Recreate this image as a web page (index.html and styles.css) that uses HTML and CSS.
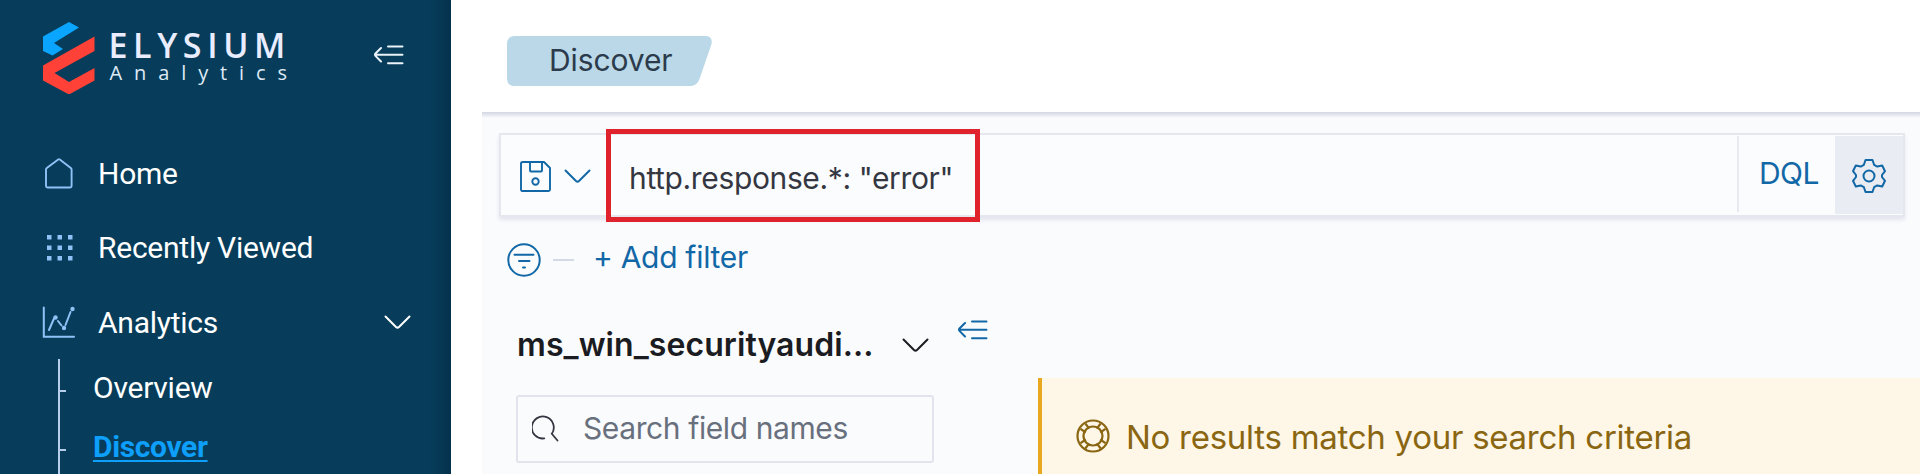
FILE: index.html
```html
<!DOCTYPE html>
<html lang="en">
<head>
<meta charset="utf-8">
<title>Discover - Elysium Analytics</title>
<link rel="stylesheet" href="styles.css">
</head>
<body>
<div class="app">
  <aside class="sidebar">
    <header class="brand">
      <svg class="brand-mark" width="52" height="72" viewBox="0 0 52 72">
        <path fill="#0aa5ff" d="M0 14.500 26 0l10 5.500L11 21l9 6-10.500 6.500L0 29z"/>
        <path fill="#ff4137" d="M0 43.500 51.500 14.500V29L11.500 51 26 60l25.500-14v12.500L26 72.500 0 58.500z"/>
      </svg>
      <div class="brand-name">
        <span class="brand-title">ELYSIUM</span>
        <span class="brand-sub">Analytics</span>
      </div>
      <svg class="brand-collapse" width="30" height="20" viewBox="0 0 30 20" fill="none" stroke="currentColor" stroke-width="2" stroke-linecap="round"><path d="M14 1.500h14.500M1.500 9.700h27M14 18.200h14.500M7 3 1.500 8.500q-1 1.200 0 2.400L7 16.500"/></svg>
    </header>
    <nav class="nav">
      <a class="nav-item">
        <svg class="icon" width="34" height="34" viewBox="0 0 34 34" fill="none" stroke="currentColor" stroke-width="1.900" stroke-linejoin="round"><path d="M4 12.500q0-1 .8-1.600L16.200 2.400q.8-.6 1.600 0l11 8.500q.8.600.8 1.600V29q0 1.500-1.500 1.500H5.500Q4 30.500 4 29z"/></svg>
        <span>Home</span>
      </a>
      <a class="nav-item">
        <svg class="icon" width="34" height="34" viewBox="0 0 34 34" fill="currentColor"><path d="M5 4h4.500v4.500H5zM15.500 4H20v4.500h-4.500zM26 4h4.500v4.500H26zM5 14.500h4.500V19H5zM15.500 14.500H20V19h-4.500zM26 14.500h4.500V19H26zM5 25h4.500v4.500H5zM15.500 25H20v4.500h-4.500zM26 25h4.500v4.500H26z"/></svg>
        <span>Recently Viewed</span>
      </a>
      <a class="nav-item nav-open">
        <svg class="icon" width="34" height="34" viewBox="0 0 34 34" fill="none" stroke="currentColor" stroke-width="2" stroke-linecap="round"><path d="M1.800 2.500v29.200H32M7 25l5-11.500M16 16l3.500 4.500M23.500 20l5-13"/><g fill="currentColor" stroke="none"><circle cx="13.500" cy="12.500" r="2.200"/><circle cx="22" cy="23" r="2.200"/><circle cx="30.500" cy="4" r="2.200"/></g></svg>
        <span>Analytics</span>
        <svg class="nav-chevron" width="27" height="15" viewBox="0 0 27 15" fill="none" stroke="currentColor" stroke-width="2" stroke-linecap="round"><path d="M1.500 1.500 12 12q1.500 1.300 3 0L25.500 1.500"/></svg>
      </a>
      <div class="subnav">
        <a class="subnav-item"><span>Overview</span></a>
        <a class="subnav-item subnav-active"><span>Discover</span></a>
      </div>
    </nav>
  </aside>

  <main class="main">
    <header class="topbar">
      <div class="crumb">
        <svg class="crumb-shape" width="205" height="50" viewBox="0 0 205 50"><path fill="#bad8e8" d="M8 0h190q8 0 6.500 8l-12 35q-2.500 7-9 7H8q-8 0-8-8V8q0-8 8-8z"/></svg>
        <span class="crumb-text">Discover</span>
      </div>
    </header>
    <section class="content">
      <div class="querybar">
        <div class="saved">
          <svg width="31" height="31" viewBox="0 0 31 31" fill="none" stroke="currentColor" stroke-width="1.900" stroke-linejoin="round"><path d="M3 1h21l6 6v21.500q0 1.500-1.500 1.500H3q-2 0-2-1.500V2.500Q1 1 3 1zM10 1v8.500q0 1 1 1h10q1 0 1-1V1"/><circle cx="15.500" cy="20.500" r="3.200"/></svg>
          <svg width="27" height="15" viewBox="0 0 27 15" fill="none" stroke="currentColor" stroke-width="2" stroke-linecap="round"><path d="M1.500 1.500 12 12q1.500 1.300 3 0L25.500 1.500"/></svg>
        </div>
        <div class="query"><span>http.response.*: "error"</span></div>
        <div class="dql"><span>DQL</span></div>
        <div class="settings">
          <svg width="34" height="34" viewBox="0 0 34 34" fill="none" stroke="currentColor" stroke-width="2" stroke-linejoin="round"><path d="M13.500 1h7l1.600 4.800 3.200 1.800 4.900-1.100L33 12.200 30 16v2l3 3.800-2.800 5.700-4.900-1.100-3.200 1.800L20.500 33h-7l-1.600-4.800-3.200-1.800-4.900 1.100L1 21.800 4 18v-2l-3-3.800 2.800-5.700 4.900 1.100 3.200-1.800z"/><circle cx="17" cy="17" r="5.500"/></svg>
        </div>
      </div>
      <div class="filters">
        <svg width="34" height="34" viewBox="0 0 34 34" fill="none" stroke="currentColor" stroke-width="2" stroke-linecap="round"><circle cx="17" cy="17" r="15.700"/><path d="M7.500 11.700h19M12 18h10.500M16 24.500h2"/></svg>
        <i class="filters-dash"></i>
        <span class="filters-add">+ Add filter</span>
      </div>
      <div class="body">
        <div class="fields">
          <div class="index">
            <span class="index-name">ms_win_securityaudi...</span>
            <svg class="index-chevron" width="27" height="15" viewBox="0 0 27 15" fill="none" stroke="currentColor" stroke-width="2" stroke-linecap="round"><path d="M1.500 1.500 12 12q1.500 1.300 3 0L25.500 1.500"/></svg>
            <svg class="index-collapse" width="30" height="20" viewBox="0 0 30 20" fill="none" stroke="currentColor" stroke-width="2" stroke-linecap="round"><path d="M14 1.500h14.500M1.500 9.700h27M14 18.200h14.500M7 3 1.500 8.500q-1 1.200 0 2.400L7 16.500"/></svg>
          </div>
          <div class="search">
            <svg width="27" height="27" viewBox="0 0 27 27" fill="none" stroke="currentColor" stroke-width="1.800" stroke-linecap="round"><path d="M12.300 23.400A11 11 0 1 1 19.800 18.800l5.700 6.700"/></svg>
            <span>Search field names</span>
          </div>
        </div>
        <div class="callout">
          <svg width="34" height="34" viewBox="0 0 34 34" fill="none" stroke="currentColor"><circle cx="17" cy="17" r="15.500" stroke-width="2.200"/><circle cx="17" cy="17" r="9.500" stroke-width="2.200"/><path stroke-width="2.200" d="M4.500 9.800l5.300 3.700M9.300 4.500l4 5.200M29.500 9.800l-5.300 3.700M24.700 4.500l-4 5.200M4.500 24.200l5.300-3.700M9.300 29.500l4-5.200M29.500 24.200l-5.300-3.700M24.700 29.500l-4-5.200"/></svg>
          <span>No results match your search criteria</span>
        </div>
      </div>
    </section>
  </main>
</div>
</body>
</html>
```

FILE: styles.css
```css
* { box-sizing: border-box; }
body { margin: 0; overflow: hidden; background: #fff; font-family: Inter, "Liberation Sans", sans-serif; font-size: 30px; font-weight: 370; }
svg { display: block; flex: none; }
span { white-space: nowrap; }
.app { display: flex; width: 1920px; height: 474px; overflow: hidden; }

.sidebar { flex: none; width: 451px; color: #fff; font-family: Roboto, sans-serif; font-weight: 400; background: linear-gradient(90deg, #073d5a 0 430px, #05314d 451px); }
.brand { display: flex; height: 137px; padding: 22px 0 0 42.500px; }
.brand-name { display: flex; flex-direction: column; width: 210px; margin: 5px 0 0 14px; font-family: "Open Sans", sans-serif; }
.brand-title { height: 36px; line-height: 36px; font-size: 34px; font-weight: 650; letter-spacing: 5.600px; color: #e9edff; }
.brand-sub { height: 20px; margin-left: 1px; line-height: 20px; font-size: 20px; letter-spacing: 11.900px; color: #dfeaf6; }
.brand-collapse { margin: 23px 0 0 55.500px; color: #eaf2fa; }
.nav-item { display: flex; align-items: center; height: 74px; padding-left: 42px; letter-spacing: -.25px; }
.nav-item .icon { margin-right: 22px; color: #8fc2f7; }
.nav-item span { padding-bottom: 2px; }
.nav-open span { padding-bottom: 0; }
.nav-chevron { margin: 0 40px 0 auto; }
.subnav { padding-left: 58px; letter-spacing: -.25px; }
.subnav-item { display: flex; align-items: center; height: 59px; border-left: 2px solid #b7cdec; }
.subnav-item::before { content: ""; width: 6px; height: 2px; margin: 4px 27px 0 0; background: #b7cdec; }
.subnav-item span { padding-bottom: 2px; }
.subnav-active span { color: #0d9ff9; font-weight: 700; letter-spacing: -.35px; text-decoration: underline; text-decoration-thickness: 2px; text-underline-offset: 3px; }

.main { display: flex; flex-direction: column; width: 1469px; padding-left: 31px; }
.topbar { flex: none; height: 112px; padding: 36px 0 0 25px; }
.crumb { display: grid; width: 205px; height: 50px; align-items: center; color: #2c3b4b; }
.crumb > * { grid-area: 1 / 1; }
.crumb-text { padding: 0 0 2px 42px; z-index: 1; letter-spacing: -.1px; }
.content { flex: 1; padding: 20px 15px 0 17px; background: linear-gradient(#d9dce6, #fafbfd 5px); border-top: 1px solid #d6dae4; }
.querybar { display: flex; height: 84px; border: 2px solid #e4e7ee; background: #fbfcfd; box-shadow: 0 3px 4px #e3e5ef; }
.saved { display: flex; align-items: center; gap: 13px; width: 105px; padding: 2px 0 0 19px; color: #1268a6; }
.query { display: flex; align-items: center; width: 374px; height: 93px; margin-top: -6px; padding: 4px 0 0 18px; border: 5px solid #e0222c; color: #343741; letter-spacing: -.36px; }
.dql { display: flex; align-items: center; width: 98px; margin: 1px 0 3px auto; padding: 0 0 3px 20px; border-left: 2px solid #e6e9f0; color: #1268a6; letter-spacing: -.6px; }
.settings { display: flex; align-items: center; justify-content: center; width: 68px; margin: 1px 0 1px 0; padding-top: 1px; background: #e9ecf3; color: #1268a6; }
.filters { display: flex; align-items: center; height: 44px; margin-top: 21px; padding-left: 8px; color: #1268a6; }
.filters-dash { width: 21px; height: 2px; margin: 0 19px 0 12px; background: #d3dae6; }
.filters-add { padding-bottom: 7px; letter-spacing: -.3px; }
.body { display: flex; height: 200px; }
.fields { width: 539px; padding-left: 17px; }
.index { display: flex; height: 113px; padding-top: 39px; color: #1a1c21; }
.index-name { width: 386px; height: 50px; line-height: 48px; padding-left: 1px; font-size: 32px; font-weight: 600; letter-spacing: .08px; }
.index-chevron { margin-top: 17px; }
.index-collapse { margin: -1px 0 0 29px; color: #1268a6; }
.search { display: flex; align-items: center; gap: 24px; width: 418px; height: 68px; padding: 0 0 2px 14px; border: 2px solid #e1e4ec; border-radius: 3px; color: #343741; }
.search span { color: #69707d; letter-spacing: -.4px; }
.callout { display: flex; align-items: flex-start; flex: 1; margin: 96px -15px 0 0; padding: 41px 0 0 34px; border-left: 4px solid #e8a820; background: #fef6e6; color: #8a6612; font-size: 33px; }
.callout span { margin-left: 16px; line-height: 36px; letter-spacing: -.27px; }
```
